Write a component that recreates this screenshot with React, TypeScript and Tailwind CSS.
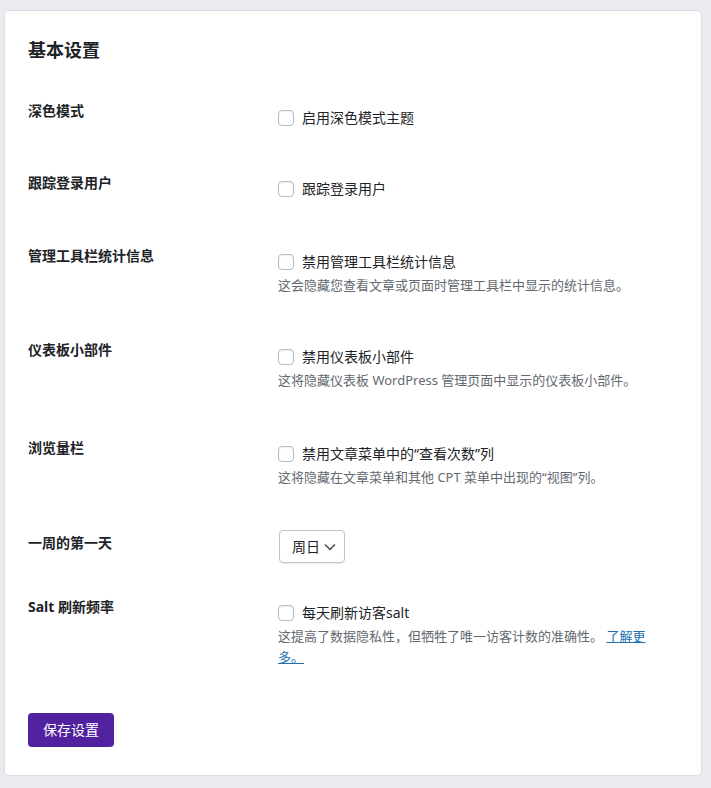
import React from "react";

const FONT = "font-['Noto_Sans','Noto_Sans_CJK_SC',sans-serif]";

function Checkbox() {
  return (
    <span className="inline-block w-[16px] h-[16px] shrink-0 rounded-[4px] border border-[#b8babe] bg-white shadow-[inset_0_1px_2px_rgba(0,0,0,0.06)]" />
  );
}

function CheckRow({ label }: { label: string }) {
  return (
    <div className="flex items-center gap-[8px] h-[16px]">
      <Checkbox />
      <span className="text-[14px] leading-[16px] text-[#1d2327]">{label}</span>
    </div>
  );
}

function Row({
  label,
  height,
  children,
}: {
  label: string;
  height: string;
  children: React.ReactNode;
}) {
  return (
    <div className={`flex ${height}`}>
      <div className="w-[250px] shrink-0 pt-[20px] text-[14px] leading-[17px] font-bold text-[#1d2327]">
        {label}
      </div>
      <div className="flex-1">{children}</div>
    </div>
  );
}

function Desc({ children }: { children: React.ReactNode }) {
  return (
    <p className="mt-[5px] w-[380px] text-[13px] leading-[20px] text-[#646970]">{children}</p>
  );
}

export default function App() {
  return (
    <div className={`min-h-screen bg-[#ebeaf0] pt-[10px] pl-[4px] pr-[9px] pb-[12px] ${FONT}`}>
      <div className="bg-white rounded-[5px] border border-[#dedde3] px-[23px] pt-[27px] pb-[28px]">
        <h2 className="text-[18px] leading-[24px] font-bold text-[#1d2327]">基本设置</h2>
        <div className="mt-[20px]">
          <Row label="深色模式" height="h-[72px]">
            <div className="pt-[28px]">
              <CheckRow label="启用深色模式主题" />
            </div>
          </Row>
          <Row label="跟踪登录用户" height="h-[73px]">
            <div className="pt-[27px]">
              <CheckRow label="跟踪登录用户" />
            </div>
          </Row>
          <Row label="管理工具栏统计信息" height="h-[94px]">
            <div className="pt-[27px]">
              <CheckRow label="禁用管理工具栏统计信息" />
              <Desc>这会隐藏您查看文章或页面时管理工具栏中显示的统计信息。</Desc>
            </div>
          </Row>
          <Row label="仪表板小部件" height="h-[98px]">
            <div className="pt-[28px]">
              <CheckRow label="禁用仪表板小部件" />
              <Desc>这将隐藏仪表板 WordPress 管理页面中显示的仪表板小部件。</Desc>
            </div>
          </Row>
          <Row label="浏览量栏" height="h-[95px]">
            <div className="pt-[27px]">
              <CheckRow label="禁用文章菜单中的“查看次数”列" />
              <Desc>这将隐藏在文章菜单和其他 CPT 菜单中出现的“视图”列。</Desc>
            </div>
          </Row>
          <Row label="一周的第一天" height="h-[64px]">
            <div className="pt-[16px]">
              <div className="inline-flex items-center h-[33px] w-[66px] ml-[1px] pl-[12px] pr-[7px] justify-between rounded-[4px] border border-[#c3c4c7] bg-white shadow-[0_1px_1px_rgba(0,0,0,0.06)]">
                <span className="text-[14px] leading-[16px] text-[#1d2327]">周日</span>
                <svg width="14" height="14" viewBox="0 0 14 14" fill="none">
                  <path d="M2.5 5l4.5 4.5L11.5 5" stroke="#50575e" strokeWidth="1.7" strokeLinecap="round" strokeLinejoin="round" />
                </svg>
              </div>
            </div>
          </Row>
          <Row label="Salt 刷新频率" height="h-[105px]">
            <div className="pt-[27px]">
              <CheckRow label="每天刷新访客salt" />
              <p className="mt-[5px] w-[380px] text-[13px] leading-[21px] text-[#646970]">
                这提高了数据隐私性，但牺牲了唯一访客计数的准确性。{" "}
                <a href="#" className="text-[#2271b1] underline">了解更多。</a>
              </p>
            </div>
          </Row>
        </div>
        <button className="mt-[30px] h-[34px] px-[15px] rounded-[4px] bg-[#51219f] text-white text-[14px] leading-[16px]">
          保存设置
        </button>
      </div>
    </div>
  );
}
